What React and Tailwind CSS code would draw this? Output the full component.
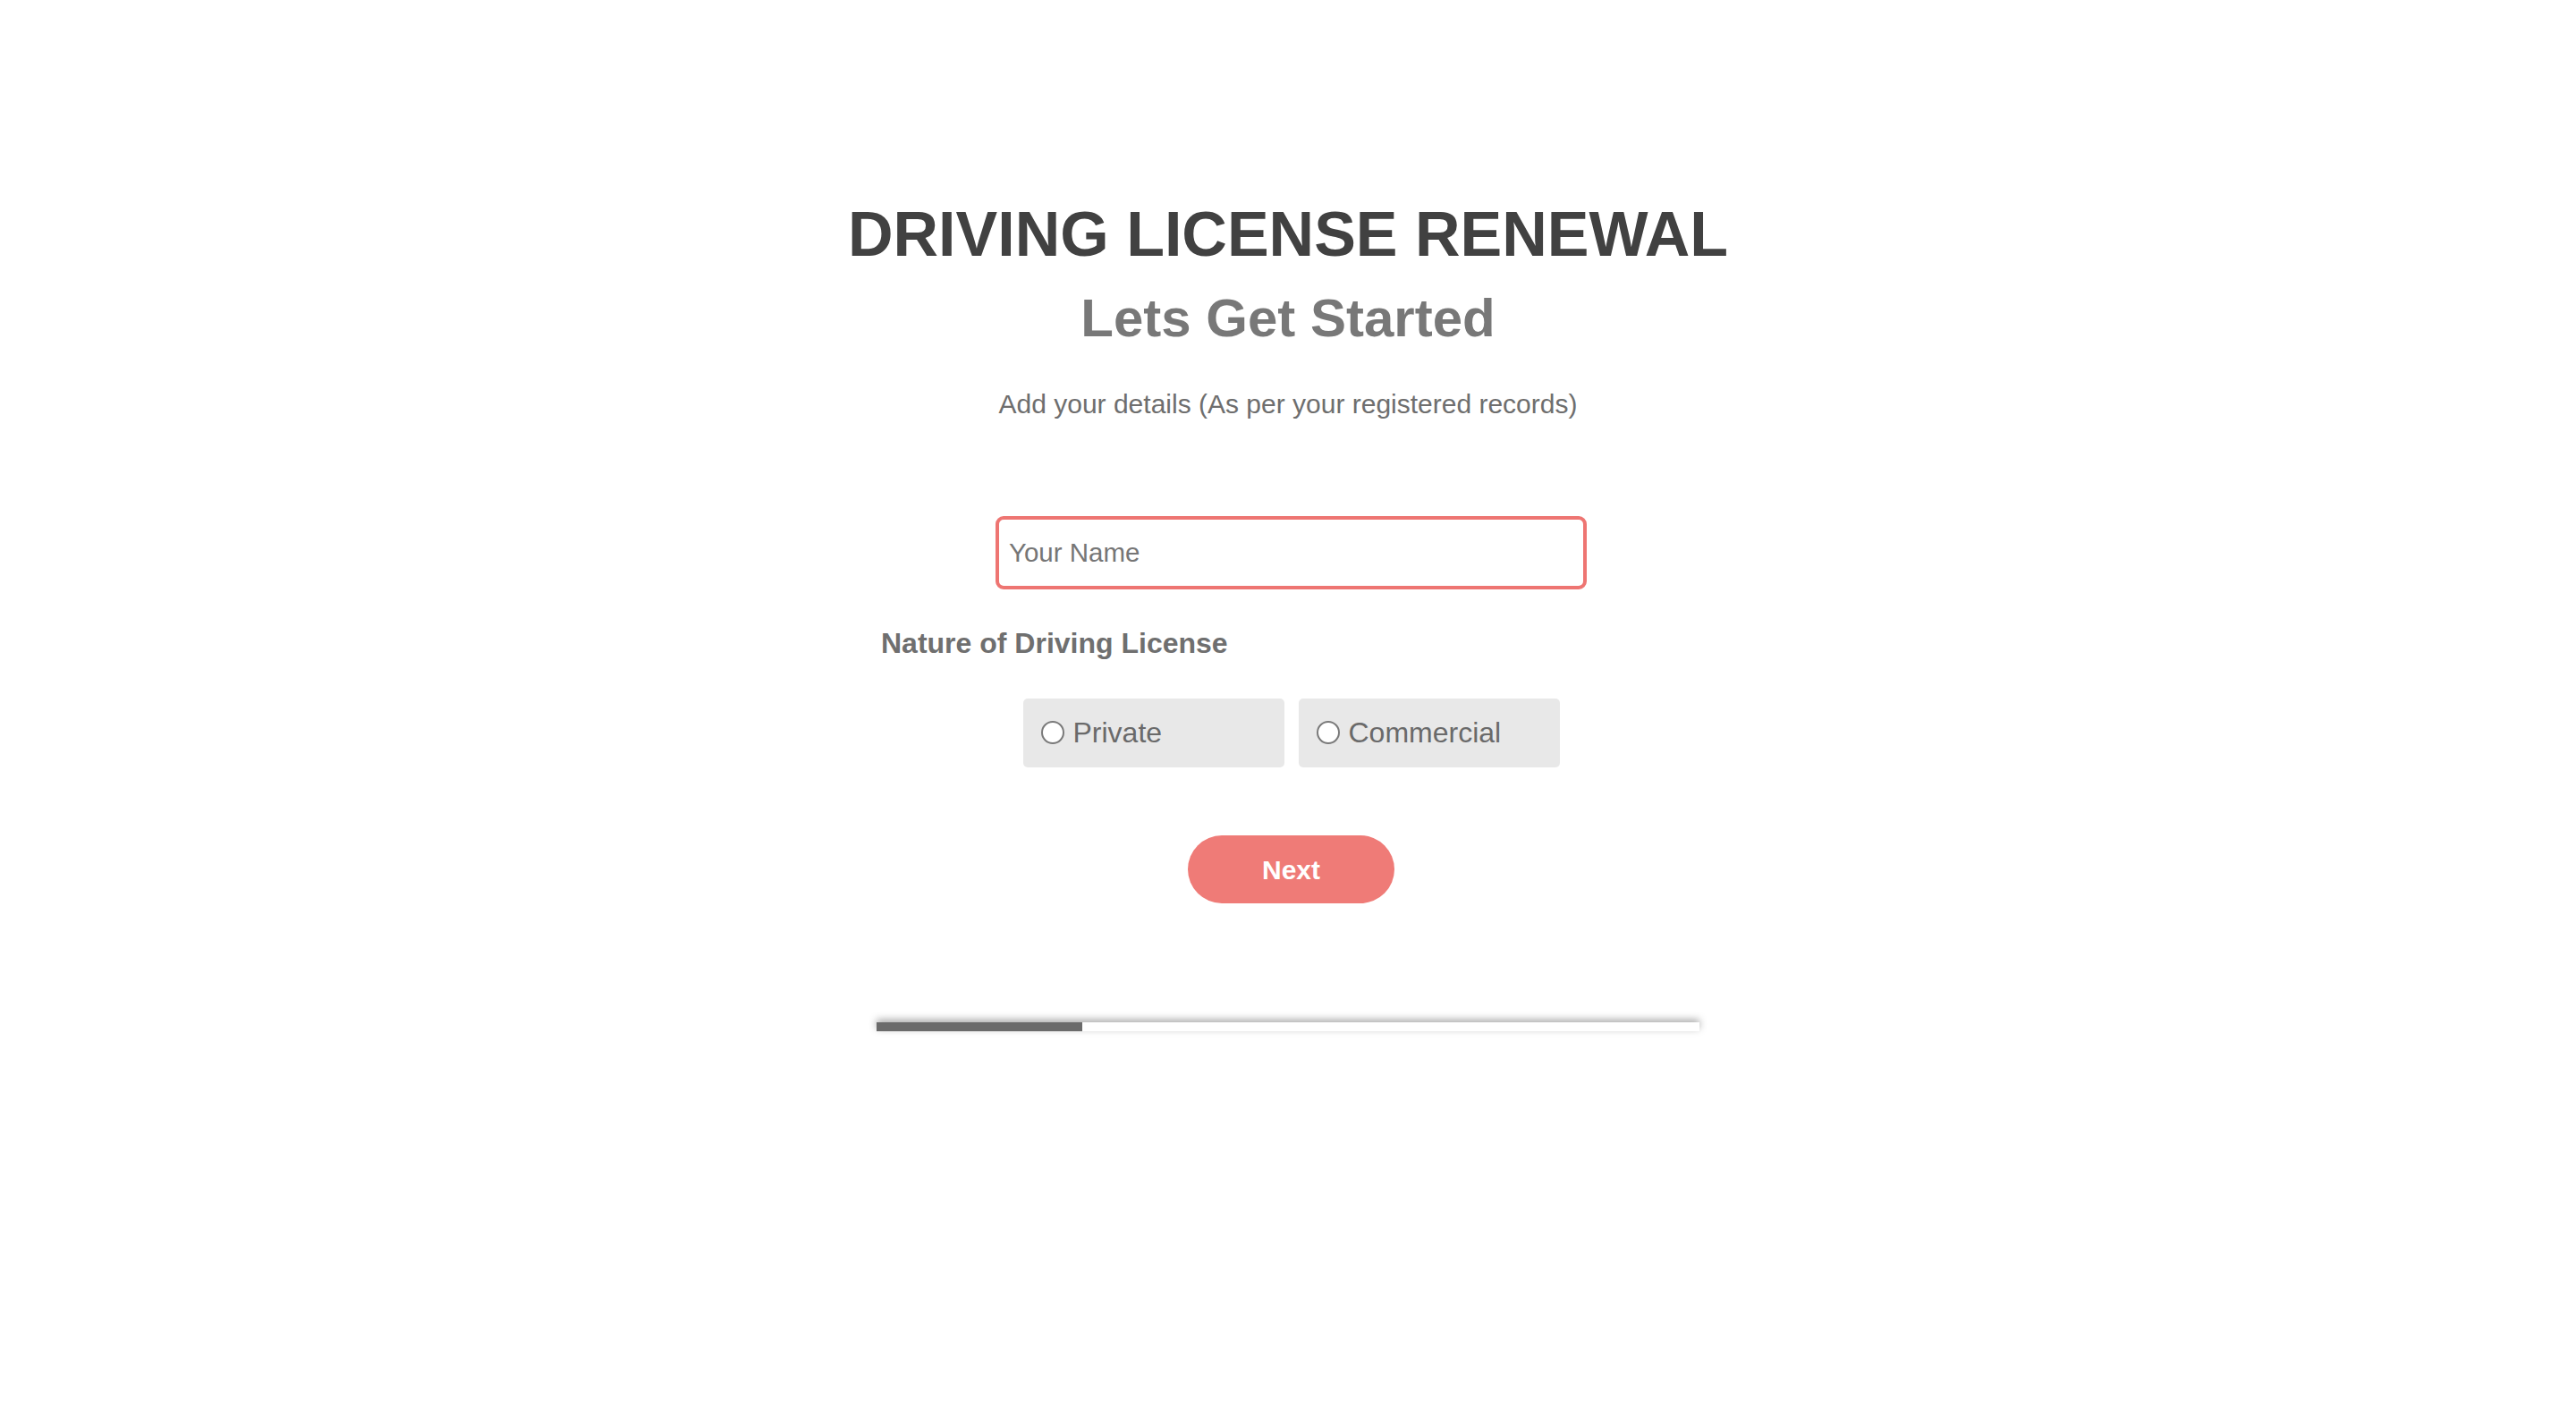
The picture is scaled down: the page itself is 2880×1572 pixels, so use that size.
import React, { useState } from 'react';

const options = ['Private', 'Commercial'];

export default function App() {
    const [name, setName] = useState('');
    const [nature, setNature] = useState('');
    const step = 1;
    const totalSteps = 4;

    return (
        <div className="min-h-screen bg-white font-['Liberation_Sans',Arial,sans-serif]">
            <div className="pt-[222px] flex flex-col items-center">
                <h1 className="text-[70px] leading-[80px] font-bold text-[#414141]">DRIVING LICENSE RENEWAL</h1>
                <h2 className="mt-[19px] text-[60px] leading-[69px] font-bold text-[#787878]">Lets Get Started</h2>
                <p className="mt-[45px] text-[30px] leading-[34px] text-[#6e6e6e]">
                    Add your details (As per your registered records)
                </p>

                <form className="w-[920px] flex flex-col" onSubmit={e => e.preventDefault()}>
                    <div className="mt-[108px] flex justify-center pl-[7px]">
                        <input
                            type="text"
                            value={name}
                            onChange={e => setName(e.target.value)}
                            placeholder="Your Name"
                            className="w-[661px] h-[82px] border-[4px] border-[#ee7572] rounded-[9px] px-[11px] text-[29.5px] text-[#555] placeholder:text-[#767676] outline-none"
                        />
                    </div>

                    <label className="mt-[42px] pl-[5px] text-[32px] leading-[37px] font-bold text-[#6f6f6f]">
                        Nature of Driving License
                    </label>

                    <div className="mt-[43px] flex justify-center gap-[16px] pl-[7px]">
                        {options.map(opt => (
                            <label
                                key={opt}
                                className="w-[292px] h-[77px] bg-[#e8e8e8] rounded-[5px] flex items-center pl-[20px] gap-[10px] cursor-pointer"
                            >
                                <input
                                    type="radio"
                                    name="nature"
                                    value={opt}
                                    checked={nature === opt}
                                    onChange={() => setNature(opt)}
                                    className="appearance-none w-[26px] h-[26px] rounded-full border-[2px] border-[#7a7a7a] bg-white checked:border-[8px] checked:border-[#ee7572] shrink-0 -mt-[1px]"
                                />
                                <span className="text-[32px] leading-[37px] text-[#6a6a6a]">{opt}</span>
                            </label>
                        ))}
                    </div>

                    <div className="mt-[76px] flex justify-center pl-[7px]">
                        <button
                            type="submit"
                            className="w-[231px] h-[76px] rounded-full bg-[#ef7b77] text-white text-[30px] font-bold flex items-center justify-center"
                        >
                            Next
                        </button>
                    </div>

                    <div className="mt-[133px] h-[10px] bg-white shadow-[0_-3px_9px_rgba(0,0,0,0.35)]">
                        <div
                            className="h-full bg-[#6b6b6b]"
                            style={{ width: `${(step / totalSteps) * 100}%` }}
                        />
                    </div>
                </form>
            </div>
        </div>
    );
}
